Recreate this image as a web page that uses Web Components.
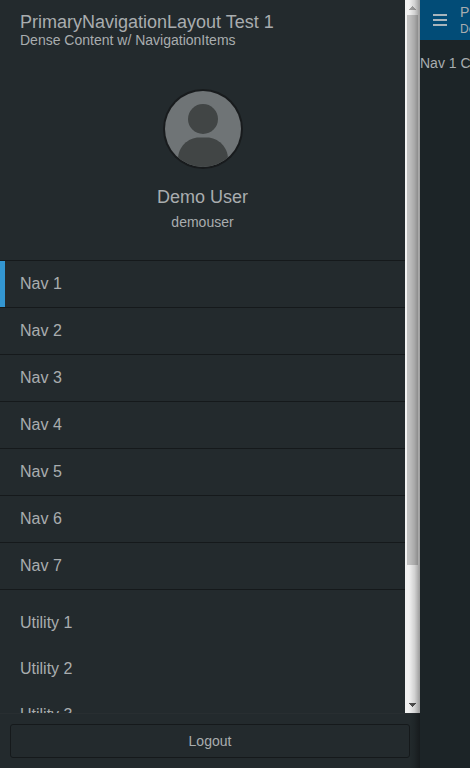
<!DOCTYPE html>
<html lang="en">
<head>
<meta charset="utf-8">
<title>PrimaryNavigationLayout Test 1</title>
<style>
html,body{margin:0;height:100%;overflow:hidden;background:#1c2427}
body{font-family:"Liberation Sans",Arial,sans-serif;color:#a9adaf}
</style>
</head>
<body>
<nav-layout>
  <nav-drawer slot="drawer">
    <drawer-header slot="scroll"><span slot="title">PrimaryNavigationLayout Test 1</span><span slot="sub">Dense Content w/ NavigationItems</span></drawer-header>
    <user-card slot="scroll"><span slot="name">Demo User</span><span slot="id">demouser</span></user-card>
    <nav-list slot="scroll">
      <nav-item selected>Nav 1</nav-item><nav-item>Nav 2</nav-item><nav-item>Nav 3</nav-item><nav-item>Nav 4</nav-item><nav-item>Nav 5</nav-item><nav-item>Nav 6</nav-item><nav-item>Nav 7</nav-item>
    </nav-list>
    <utility-list slot="scroll"><utility-item>Utility 1</utility-item><utility-item>Utility 2</utility-item><utility-item>Utility 3</utility-item></utility-list>
    <logout-button slot="footer">Logout</logout-button>
  </nav-drawer>
  <app-header slot="main"><span slot="title">P</span><span slot="sub">De</span></app-header>
  <page-content slot="main">Nav 1 C</page-content>
</nav-layout>
<script>
function define(name, markup) {
  const template = document.createElement('template');
  template.innerHTML = markup;
  customElements.define(name, class extends HTMLElement {
    constructor() {
      super();
      this.attachShadow({mode: 'open'}).append(template.content.cloneNode(true));
    }
  });
}
define('nav-layout', `<style>
:host{display:grid;grid-template-columns:420px 50px;height:768px;overflow:hidden}
.main{display:flex;flex-direction:column;overflow:hidden}</style>
<slot name="drawer"></slot><div class="main"><slot name="main"></slot></div>`);
define('nav-drawer', `<style>
:host{display:flex;flex-direction:column;position:relative;height:768px;background:#232a2d}
.body{display:flex;height:713px}
.scroll{width:405px;height:713px;overflow:hidden}
.foot{box-sizing:border-box;height:55px;border-top:1px solid #282e31;padding:10px}
.edge{position:absolute;top:0;right:0;bottom:0;width:11px;background:linear-gradient(90deg,rgba(0,0,0,0),rgba(0,0,0,.13) 50%,rgba(0,0,0,.36));pointer-events:none}</style>
<div class="body"><div class="scroll"><slot name="scroll"></slot></div><scroll-track></scroll-track></div>
<div class="foot"><slot name="footer"></slot></div><div class="edge"></div>`);
define('scroll-track', `<style>
:host{display:flex;flex-direction:column;align-items:center;width:15px;height:713px;background:#f1f1f1}
svg{display:block;flex:none}.thumb{width:11px;height:550px;background:#c1c1c1}.gap{flex:1}</style>
<svg width="15" height="15" shape-rendering="crispEdges"><path d="M7 6h1v1h1v1h1v1h1v1H4V9h1V8h1V7h1z" fill="#a3a3a3"/></svg>
<div class="thumb"></div><div class="gap"></div>
<svg width="15" height="15" shape-rendering="crispEdges"><path d="M4 5h7v1h-1v1H9v1H8v1H7V8H6V7H5V6H4z" fill="#505050"/></svg>`);
define('drawer-header', `<style>
:host{display:flex;flex-direction:column;box-sizing:border-box;height:69px;padding:12px 20px 0;white-space:nowrap}
.t{font-size:18px;line-height:20px}.s{font-size:14px;line-height:17px}</style>
<div class="t"><slot name="title"></slot></div><div class="s"><slot name="sub"></slot></div>`);
define('user-card', `<style>
:host{display:flex;flex-direction:column;align-items:center;box-sizing:border-box;height:191px;padding-top:20px}
svg{display:block;flex:none}.n{font-size:18px;line-height:22px;margin-top:17px}.i{font-size:14px;line-height:18px;margin-top:5px}</style>
<svg width="80" height="80" viewBox="0 0 80 80"><defs><clipPath id="c"><circle cx="40" cy="40" r="38"/></clipPath></defs>
<circle cx="40" cy="40" r="40" fill="#181b1d"/><circle cx="40" cy="40" r="38" fill="#6f7476"/>
<g clip-path="url(#c)" fill="#414545"><circle cx="40" cy="30" r="15"/><path d="M15 80V70C15 58 25 48.500 36 48.500h8C55 48.500 65 58 65 70V80z"/></g></svg>
<div class="n"><slot name="name"></slot></div><div class="i"><slot name="id"></slot></div>`);
define('nav-list', `<style>:host{display:flex;flex-direction:column;border-top:1px solid #15191b}</style><slot></slot>`);
define('nav-item', `<style>
:host{display:block;box-sizing:border-box;height:47px;padding-left:20px;border-bottom:1px solid #15191b;font-size:16px;line-height:45px}
:host([selected]){background:linear-gradient(#3396d1,#3396d1) left/5px 100% no-repeat}</style><slot></slot>`);
define('utility-list', `<style>:host{display:flex;flex-direction:column;padding-top:10px}</style><slot></slot>`);
define('utility-item', `<style>:host{display:block;height:46px;padding-left:20px;font-size:16px;line-height:45px}</style><slot></slot>`);
define('logout-button', `<style>
:host{display:flex;box-sizing:border-box;justify-content:center;height:34px;border:1px solid #15191b;border-radius:3px;font-size:14px;line-height:32px}</style><slot></slot>`);
define('app-header', `<style>
:host{display:flex;height:40px;background:#024c77;overflow:hidden;white-space:nowrap}
svg{display:block;flex:none}.x{padding-top:3px;font-size:14px;line-height:18px}.s{font-size:12px;line-height:17px}</style>
<svg width="40" height="40" shape-rendering="crispEdges"><path d="M13 14h14v2H13zM13 19h14v2H13zM13 24h14v2H13z" fill="#a8b5bc"/></svg>
<div class="x"><div><slot name="title"></slot></div><div class="s"><slot name="sub"></slot></div></div>`);
define('page-content', `<style>:host{display:block;padding-top:14px;font-size:14px;line-height:18px;white-space:nowrap}</style><slot></slot>`);
</script>
</body>
</html>
